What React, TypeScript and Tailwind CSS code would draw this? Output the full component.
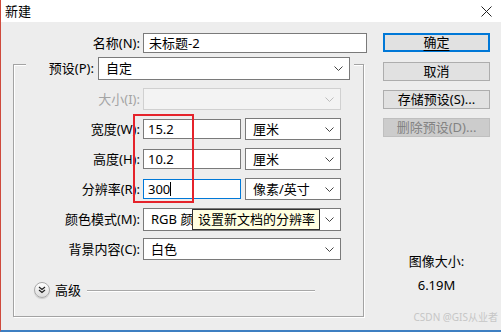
import React from "react";

const Chev = ({ c = "#444" }: { c?: string }) => (
  <svg width="9" height="5" viewBox="0 0 9 5" className="shrink-0">
    <path d="M0.5 0.5 L4.5 4.5 L8.5 0.5" fill="none" stroke={c} strokeWidth="1" />
  </svg>
);

const Select = ({ text, w, h = "h-[22px]" }: { text: string; w: string; h?: string }) => (
  <div className={`${w} ${h} flex items-center justify-between border border-[#7a7a7a] bg-white pl-[7px] pr-[6px]`}>
    <span className="leading-none">{text}</span>
    <Chev />
  </div>
);

export default function App() {
  return (
    <div
      className="relative w-[501px] h-[332px] overflow-hidden bg-[#ededed] text-[13px] text-black border-l border-l-[#cf4a3c] border-b-2 border-b-[#3d7fc2]"
      style={{ fontFamily: '"Noto Sans", "Noto Sans CJK SC", sans-serif' }}
    >
      {/* title bar */}
      <div className="h-[22px] bg-white flex items-center justify-between pl-[4px] pr-[9px]">
        <span className="leading-none">新建</span>
        <svg width="11" height="11" viewBox="0 0 11 11">
          <path d="M0.5 0.5 L10.5 10.5 M10.5 0.5 L0.5 10.5" stroke="#222" strokeWidth="1" />
        </svg>
      </div>

      <div className="flex">
        {/* left column */}
        <div className="w-[370px] pl-[12px]">
          <div className="mt-[11px] flex items-center h-[20px]">
            <div className="w-[127px] text-right leading-none">名称(N):</div>
            <div className="ml-[3px] w-[224px] h-[20px] border border-[#7a7a7a] bg-white pl-[5px] flex items-center leading-none">
              未标题-2
            </div>
          </div>

          <fieldset className="-mt-[4px] w-[351px] border border-[#a3a3a3] shadow-[inset_1px_1px_0_#fff,1px_1px_0_#fff]">
            <legend className="ml-[12px] pt-[8px] pr-[4px] bg-[#ededed]">
              <div className="flex items-center">
                <div className="w-[68px] text-right leading-none">预设(P):</div>
                <div className="ml-[4px]">
                  <Select text="自定" w="w-[252px]" h="h-[23px]" />
                </div>
              </div>
            </legend>

            <div className="pt-[8px] flex flex-col gap-[8px]">
              <div className="flex items-center h-[22px]">
                <div className="w-[126px] text-right leading-none text-[#a4a4a4]">大小(I):</div>
                <div className="ml-[3px] w-[198px] h-[22px] border border-[#d0d0d0] bg-[#f3f3f3] flex items-center justify-end pr-[6px]">
                  <Chev c="#bdbdbd" />
                </div>
              </div>

              <div className="flex items-center h-[22px]">
                <div className="w-[126px] text-right leading-none">宽度(W):</div>
                <div className="ml-[3px] w-[98px] h-[20px] border border-[#7a7a7a] bg-white pl-[4px] flex items-center leading-none">
                  15.2
                </div>
                <div className="ml-[4px]">
                  <Select text="厘米" w="w-[96px]" />
                </div>
              </div>

              <div className="flex items-center h-[22px]">
                <div className="w-[126px] text-right leading-none">高度(H):</div>
                <div className="ml-[3px] w-[98px] h-[20px] border border-[#7a7a7a] bg-white pl-[4px] flex items-center leading-none">
                  10.2
                </div>
                <div className="ml-[4px]">
                  <Select text="厘米" w="w-[96px]" />
                </div>
              </div>

              <div className="flex items-center h-[22px]">
                <div className="w-[126px] text-right leading-none">分辨率(R):</div>
                <div className="ml-[3px] w-[98px] h-[20px] border border-[#0078d7] bg-white pl-[4px] flex items-center leading-none">
                  300
                  <span className="inline-block w-px h-[14px] bg-black" />
                </div>
                <div className="ml-[4px]">
                  <Select text="像素/英寸" w="w-[96px]" />
                </div>
              </div>

              <div className="flex items-center h-[22px]">
                <div className="w-[126px] text-right leading-none">颜色模式(M):</div>
                <div className="ml-[3px]">
                  <Select text="RGB 颜色" w="w-[198px]" h="h-[23px]" />
                </div>
              </div>

              <div className="flex items-center h-[22px]">
                <div className="w-[126px] text-right leading-none">背景内容(C):</div>
                <div className="ml-[3px]">
                  <Select text="白色" w="w-[198px]" />
                </div>
              </div>
            </div>

            <div className="mt-[22px] pb-[18px] flex items-center h-[16px] pl-[20px] box-content">
              <div className="w-[16px] h-[16px] rounded-full border border-[#a9a9a9] bg-gradient-to-b from-white to-[#dcdcdc] flex items-center justify-center shadow-[0_1px_1px_rgba(0,0,0,0.15)]">
                <svg width="8" height="8" viewBox="0 0 8 8">
                  <path d="M1 1 L4 3.5 L7 1 M1 4 L4 6.5 L7 4" fill="none" stroke="#222" strokeWidth="1.2" />
                </svg>
              </div>
              <span className="ml-[5px] leading-none">高级</span>
              <div className="ml-[6px] flex-1 mr-[48px] h-px bg-[#a8a8a8] shadow-[0_1px_0_#fff]" />
            </div>
          </fieldset>
        </div>

        {/* right column */}
        <div className="w-[107px] pl-0 ml-[12px] flex flex-col">
          <div className="mt-[11px] h-[19px] border-2 border-[#0078d7] bg-[#e1e1e1] flex items-center justify-center leading-none">
            <span className="underline underline-offset-[3px]">确定</span>
          </div>
          <div className="mt-[10px] h-[19px] border border-[#adadad] bg-[#e1e1e1] flex items-center justify-center leading-none">
            取消
          </div>
          <div className="mt-[9px] h-[19px] border border-[#adadad] bg-[#e1e1e1] flex items-center justify-center leading-none">
            存储预设(S)...
          </div>
          <div className="mt-[9px] h-[19px] border border-[#bfbfbf] bg-[#cccccc] text-[#838383] flex items-center justify-center leading-none">
            删除预设(D)...
          </div>
          <div className="mt-[115px] h-[18px] flex items-center justify-center leading-none">图像大小:</div>
          <div className="mt-[6px] h-[18px] flex items-center justify-center leading-none">6.19M</div>
        </div>
      </div>

      {/* red highlight rectangle */}
      <div className="absolute left-[132px] top-[114px] w-[61px] h-[89px] border-2 border-[#e5232b]" />

      {/* tooltip */}
      <div className="absolute left-[191px] top-[209px] w-[128px] h-[21px] border border-[#333] bg-[#ffffe1] flex items-center pl-[5px] leading-none">
        设置新文档的分辨率
      </div>

      {/* watermark */}
      <div className="absolute right-[3px] top-[312px] text-[10px] leading-none text-[#c6c6c6]">
        CSDN @GIS从业者
      </div>
    </div>
  );
}
